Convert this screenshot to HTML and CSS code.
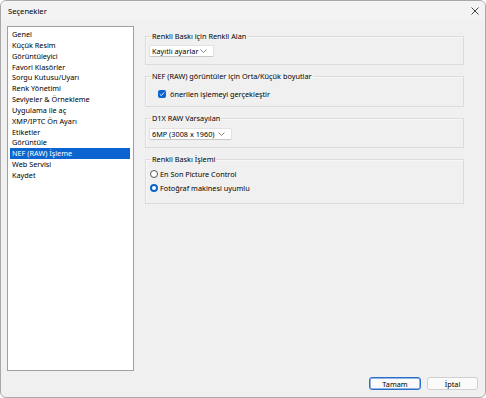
FILE: index.html
```html
<!DOCTYPE html>
<html lang="tr">
<head>
    <meta charset="UTF-8">
    <title>Seçenekler</title>
    <link rel="stylesheet" href="styles.css">
</head>
<body>
    <div class="window">
        <div class="title-bar">
            <span class="title">Seçenekler</span>
            <svg class="close" width="8" height="8" viewBox="0 0 8 8">
                <path d="M0.5 0.5 L7.5 7.5 M7.5 0.5 L0.5 7.5" stroke="#333" stroke-width="0.9" fill="none"/>
            </svg>
        </div>

        <div class="content">
            <ul class="nav-list">
                <li>Genel</li>
                <li>Küçük Resim</li>
                <li>Görüntüleyici</li>
                <li>Favori Klasörler</li>
                <li>Sorgu Kutusu/Uyarı</li>
                <li>Renk Yönetimi</li>
                <li>Seviyeler &amp; Örnekleme</li>
                <li>Uygulama ile aç</li>
                <li>XMP/IPTC Ön Ayarı</li>
                <li>Etiketler</li>
                <li>Görüntüle</li>
                <li class="selected">NEF (RAW) İşleme</li>
                <li>Web Servisi</li>
                <li>Kaydet</li>
            </ul>

            <div class="panel">
                <fieldset class="group">
                    <legend>Renkli Baskı için Renkli Alan</legend>
                    <div class="select select-short">
                        <span>Kayıtlı ayarlar</span>
                        <svg width="7" height="4" viewBox="0 0 7 4"><path d="M0.5 0.5 L3.5 3.5 L6.5 0.5" stroke="#666" stroke-width="0.8" fill="none"/></svg>
                    </div>
                </fieldset>

                <fieldset class="group group-check">
                    <legend>NEF (RAW) görüntüler için Orta/Küçük boyutlar</legend>
                    <div class="check-row">
                        <span class="checkbox">
                            <svg width="8" height="8" viewBox="0 0 8 8"><path d="M1.8 4.2 L3.3 5.6 L6.2 2.4" stroke="#fff" stroke-width="0.9" fill="none"/></svg>
                        </span>
                        <span>önerilen işlemeyi gerçekleştir</span>
                    </div>
                </fieldset>

                <fieldset class="group group-raw">
                    <legend>D1X RAW Varsayılan</legend>
                    <div class="select select-long">
                        <span>6MP (3008 x 1960)</span>
                        <svg width="7" height="4" viewBox="0 0 7 4"><path d="M0.5 0.5 L3.5 3.5 L6.5 0.5" stroke="#666" stroke-width="0.8" fill="none"/></svg>
                    </div>
                </fieldset>

                <fieldset class="group group-radio">
                    <legend>Renkli Baskı İşlemi</legend>
                    <div class="radio-row">
                        <span class="radio"></span>
                        <span>En Son Picture Control</span>
                    </div>
                    <div class="radio-row">
                        <span class="radio radio-on"></span>
                        <span>Fotoğraf makinesi uyumlu</span>
                    </div>
                </fieldset>
            </div>
        </div>

        <div class="footer">
            <div class="btn btn-default">Tamam</div>
            <div class="btn">İptal</div>
        </div>
    </div>
</body>
</html>
```

FILE: styles.css
```css
* {
    margin: 0;
    padding: 0;
    box-sizing: border-box;
}

body {
    width: 486px;
    height: 398px;
    overflow: hidden;
    background: #ffffff;
    font-family: "Noto Sans", "Open Sans", sans-serif;
    font-size: 7.3px;
    color: #000;
}

.window {
    width: 486px;
    height: 398px;
    border: 1px solid #a8a8a8;
    border-radius: 6px;
    background: #f0f0f0;
    display: flex;
    flex-direction: column;
    overflow: hidden;
}

.title-bar {
    height: 20px;
    flex: none;
    display: flex;
    align-items: center;
    justify-content: space-between;
    padding: 0 6px 0 7px;
    background: #f3f3f3;
}

.title {
    font-size: 7.6px;
}

.content {
    display: flex;
    padding: 5px 0 0 6px;
    gap: 11px;
}

.nav-list {
    list-style: none;
    width: 127px;
    height: 345px;
    background: #fff;
    border: 1px solid #a0a0a0;
    padding: 2px 3px 0 2px;
}

.nav-list li {
    height: 10.85px;
    line-height: 10.85px;
    padding-left: 2px;
    white-space: nowrap;
}

.nav-list li.selected {
    background: #0b64cf;
    color: #fff;
}

.panel {
    display: flex;
    flex-direction: column;
    gap: 6px;
    padding-top: 5px;
}

.group {
    width: 319px;
    border: 1px solid #dcdcdc;
    box-shadow: inset 1px 1px 0 #f8f8f8;
    padding: 0 3px 7px 3px;
}

.group legend {
    margin-left: 2px;
    padding: 0 1px;
    line-height: 10px;
}

.select {
    height: 12px;
    margin-top: 4px;
    background: #fff;
    border: 1px solid #e2e2e2;
    border-bottom-color: #c8c8c8;
    border-radius: 2px;
    display: flex;
    align-items: center;
    justify-content: space-between;
    padding: 0 6px 0 2px;
}

.select-short {
    width: 65px;
}

.select-long {
    width: 83px;
}

.group-raw .select {
    margin-top: 5px;
}

.check-row {
    display: flex;
    align-items: center;
    gap: 4px;
    height: 8px;
    margin-top: 9px;
    padding-left: 9px;
}

.group-check {
    padding-bottom: 8px;
}

.checkbox {
    width: 8px;
    height: 8px;
    border-radius: 2px;
    background: #0b64cf;
    display: flex;
}

.group-radio {
    padding-top: 2.5px;
    padding-bottom: 7.5px;
}

.radio-row {
    display: flex;
    align-items: center;
    gap: 2px;
    height: 14.5px;
    padding-left: 1px;
}

.radio {
    width: 8px;
    height: 8px;
    border-radius: 50%;
    border: 1px solid #555;
    background: #fff;
}

.radio-on {
    border: 2.2px solid #0b64cf;
}

.footer {
    margin-top: auto;
    display: flex;
    justify-content: flex-end;
    gap: 6px;
    padding: 0 7px 7px 0;
}

.btn {
    width: 51px;
    height: 13px;
    border: 1px solid #d0d0d0;
    border-radius: 3px;
    background: #fbfbfb;
    display: flex;
    align-items: center;
    justify-content: center;
}

.btn-default {
    border: 1px solid #2a6fc9;
    box-shadow: inset 0 0 0 0.5px #2a6fc9;
    width: 52px;
}
```
